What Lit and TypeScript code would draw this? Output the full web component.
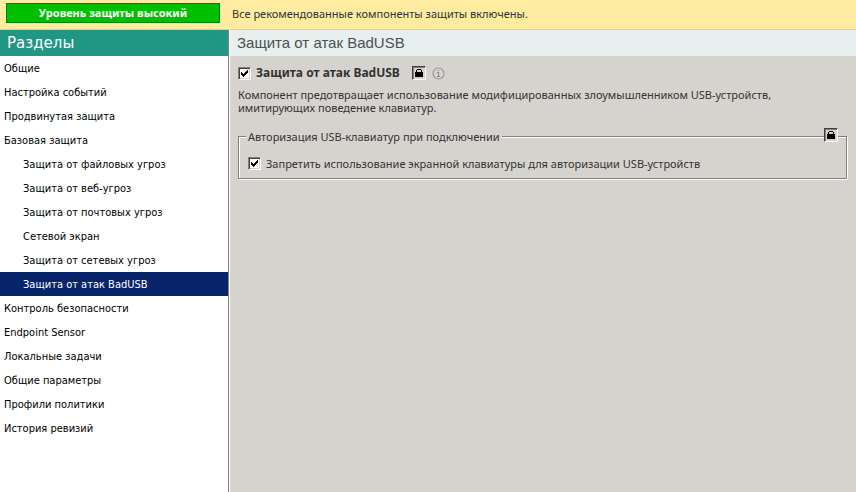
import { LitElement, html, css, svg } from "lit";
import { customElement, property, state } from "lit/decorators.js";
import { classMap } from "lit/directives/class-map.js";

@customElement("classic-checkbox")
class ClassicCheckbox extends LitElement {
  @property({ type: Boolean }) checked = false;
  static styles = css`
    :host { display: block; }
    .label { display: flex; align-items: center; gap: 5px; }
    .box { display: grid; flex: none; width: 13px; height: 13px; }
    .input {
      grid-area: 1 / 1; appearance: none; box-sizing: border-box; margin: 0;
      width: 13px; height: 13px; background: #fff; border: 1px solid;
      border-color: #808080 #fff #fff #808080;
      box-shadow: inset 1px 1px 0 #404040, inset -1px -1px 0 #d6d3ce;
    }
    .input:focus-visible { outline: 1px dotted #000; }
    .tick { grid-area: 1 / 1; pointer-events: none; visibility: hidden; }
    .input:checked + .tick { visibility: visible; }
  `;
  render() {
    return html`<label class="label">
      <span class="box">
        <input class="input" type="checkbox" .checked=${this.checked} />
        <svg class="tick" width="13" height="13" viewBox="0 0 13 13" shape-rendering="crispEdges" aria-hidden="true">
          <path d="M3 5h1v1h1v1h1v-1h1v-1h1v-1h1v-1h1v3h-1v1h-1v1h-1v1h-1v1h-1v-1h-1v-1h-1z" />
        </svg>
      </span>
      <slot></slot>
    </label>`;
  }
}

@customElement("lock-button")
class LockButton extends LitElement {
  static styles = css`
    :host { display: block; }
    .lock {
      display: block; box-sizing: border-box; width: 14px; height: 14px; padding: 0;
      background: #d6d3ce; border: 1px solid; border-color: #404040 #fff #fff #404040;
      box-shadow: inset 1px 1px 0 #808080;
    }
    .icon { display: block; }
  `;
  render() {
    return html`<button class="lock" type="button" aria-label="Замок">
      <svg class="icon" width="12" height="12" viewBox="1 1 12 12" shape-rendering="crispEdges">
        <path d="M3 6h1v-2h1v-1h4v1h1v2h1v5h-8zM5 4v2h4v-2z" fill-rule="evenodd" />
      </svg>
    </button>`;
  }
}

interface Section { title: string; nested?: boolean; }

const sections: Section[] = [
  { title: "Общие" },
  { title: "Настройка событий" },
  { title: "Продвинутая защита" },
  { title: "Базовая защита" },
  { title: "Защита от файловых угроз", nested: true },
  { title: "Защита от веб-угроз", nested: true },
  { title: "Защита от почтовых угроз", nested: true },
  { title: "Сетевой экран", nested: true },
  { title: "Защита от сетевых угроз", nested: true },
  { title: "Защита от атак BadUSB", nested: true },
  { title: "Контроль безопасности" },
  { title: "Endpoint Sensor" },
  { title: "Локальные задачи" },
  { title: "Общие параметры" },
  { title: "Профили политики" },
  { title: "История ревизий" },
];

const infoIcon = svg`<circle cx="6.5" cy="6.5" r="5.5" fill="none" stroke="#999" stroke-width="1.2" />
  <path d="M6 3h1v1h-1zM5 5h2v4h1v1h-3v-1h1v-3h-1z" fill="#888" />`;

@customElement("app-root")
class AppRoot extends LitElement {
  @state() private current = "Защита от атак BadUSB";
  static styles = css`
    :host {
      display: flex; flex-direction: column; min-height: 100vh;
      background: #d6d3ce; color: #333;
      font: 11px/13px "Noto Sans", sans-serif;
    }
    .banner {
      display: flex; align-items: center; gap: 12px; box-sizing: border-box;
      min-height: 30px; padding: 0 6px 3px; background: #ffeca0; border-bottom: 1px solid #ccd0d0;
    }
    .level {
      box-sizing: border-box; width: 214px; height: 20px; line-height: 18px; text-align: center;
      background: #00bf00; border: 1px solid #008000; color: #fff; font-weight: bold;
    }
    .body { display: grid; grid-template-columns: 228px 1fr; flex: 1; }
    .side { background: #fff; color: #000; font-family: "DejaVu Sans Condensed", "DejaVu Sans", sans-serif; }
    .heading {
      margin: 0; padding: 0 7px; height: 26px;
      font: 15px/26px "DejaVu Sans", sans-serif;
    }
    .side .heading { background: #219684; color: #fff; }
    .link {
      display: block; padding: 0 4px; height: 24px; line-height: 25px;
      color: inherit; text-decoration: none;
    }
    .nested { padding-left: 23px; }
    .active { background: #08246b; color: #fff; }
    .main { border-left: 1px solid #808080; box-shadow: inset 1px 0 0 #fff; padding-left: 1px; }
    .main .heading { background: #e7efef; color: #4a5252; font-family: "Liberation Sans", sans-serif; }
    .content { padding: 9px 9px 9px 8px; }
    .title { display: flex; align-items: center; gap: 12px; height: 16px; }
    .name { font-size: 12px; line-height: 16px; font-weight: bold; }
    .info { display: block; margin-left: -6px; }
    .text { margin: 7px 0 16px; }
    .group {
      position: relative; margin: 0; min-width: 0; padding: 14px 9px 8px;
      border: 1px solid #808080; box-shadow: 1px 1px 0 #fff, inset 1px 1px 0 #fff;
    }
    .legend { padding: 0 2px; margin-left: -2px; background: #d6d3ce; }
    .corner { position: absolute; right: 8px; top: -15px; }
  `;
  render() {
    return html`
      <header class="banner">
        <div class="level">Уровень защиты высокий</div>
        <div>Все рекомендованные компоненты защиты включены.</div>
      </header>
      <div class="body">
        <nav class="side">
          <h2 class="heading">Разделы</h2>
          ${sections.map((s) => html`<a href="#"
            class=${classMap({ link: true, nested: !!s.nested, active: s.title === this.current })}
            @click=${(e: Event) => { e.preventDefault(); this.current = s.title; }}>${s.title}</a>`)}
        </nav>
        <main class="main">
          <h1 class="heading">Защита от атак BadUSB</h1>
          <div class="content">
            <div class="title">
              <classic-checkbox checked><span class="name">Защита от атак BadUSB</span></classic-checkbox>
              <lock-button></lock-button>
              <svg class="info" width="13" height="13" viewBox="0 0 13 13">${infoIcon}</svg>
            </div>
            <p class="text">
              Компонент предотвращает использование модифицированных злоумышленником USB-устройств,<br />
              имитирующих поведение клавиатур.
            </p>
            <fieldset class="group">
              <legend class="legend">Авторизация USB-клавиатур при подключении</legend>
              <classic-checkbox checked>Запретить использование экранной клавиатуры для авторизации USB-устройств</classic-checkbox>
              <lock-button class="corner"></lock-button>
            </fieldset>
          </div>
        </main>
      </div>
    `;
  }
}
